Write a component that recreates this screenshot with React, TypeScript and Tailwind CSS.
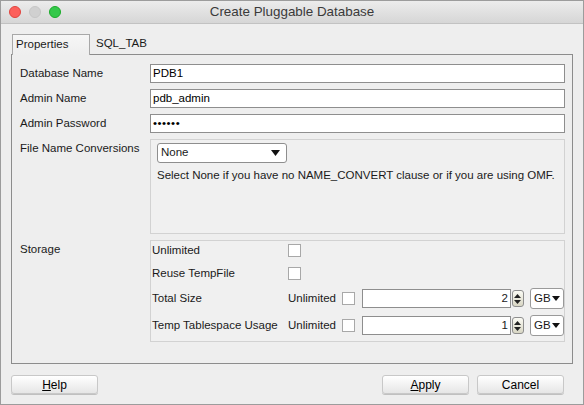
import { ReactNode } from 'react'

const font = { fontFamily: '"Liberation Sans", Arial, sans-serif' }

function TextField({ value, className = '' }: { value: string; className?: string }) {
  return (
    <div
      className={`flex h-[19px] items-center border border-[#8e8e8e] bg-white px-[2px] text-black ${className}`}
    >
      {value}
    </div>
  )
}

function Check() {
  return <div className="h-[13px] w-[13px] shrink-0 border border-[#a8a8a8] bg-white" />
}

function Caret() {
  return (
    <svg width="9" height="6" viewBox="0 0 9 6">
      <path d="M0 0 L9 0 L4.5 6 Z" fill="#111" />
    </svg>
  )
}

function Spinner({ value }: { value: string }) {
  return (
    <div className="flex items-center">
      <div className="flex h-[19px] w-[149px] items-center justify-end border border-[#8e8e8e] bg-white pr-[2px]">
        {value}
      </div>
      <div className="ml-[1px] flex h-[17px] w-[12px] flex-col items-center justify-center gap-[2px] rounded-[3px] border border-[#8e8e8e] bg-gradient-to-b from-[#fbfbf4] to-[#d8d6c4]">
        <svg width="7" height="4" viewBox="0 0 7 4">
          <path d="M0 4 L7 4 L3.5 0 Z" fill="#222" />
        </svg>
        <svg width="7" height="4" viewBox="0 0 7 4">
          <path d="M0 0 L7 0 L3.5 4 Z" fill="#222" />
        </svg>
      </div>
      <div className="ml-[6px] flex h-[21px] w-[34px] items-center justify-between rounded-[3px] border border-[#9a9a9a] bg-white pl-[3px] pr-[3px]">
        <span>GB</span>
        <svg width="8" height="5" viewBox="0 0 8 5">
          <path d="M0 0 L8 0 L4 5 Z" fill="#111" />
        </svg>
      </div>
    </div>
  )
}

function Row({ label, children }: { label: string; children: ReactNode }) {
  return (
    <div className="flex items-center">
      <div className="w-[130px] shrink-0">{label}</div>
      <div className="flex-1">{children}</div>
    </div>
  )
}

function Button({ children, className = '' }: { children: ReactNode; className?: string }) {
  return (
    <div
      className={`flex h-[19px] w-[87px] items-center justify-center rounded-[3px] border border-[#c8c8c8] bg-gradient-to-b from-[#ffffff] to-[#e6e6e6] text-[12px] text-black shadow-[0_1px_0_#c0c0c0] ${className}`}
    >
      {children}
    </div>
  )
}

export default function App() {
  return (
    <div
      className="flex h-[405px] w-[584px] flex-col overflow-hidden border border-[#9c9c9c] bg-[#eeeeee] text-[11.5px] text-[#1a1a1a]"
      style={font}
    >
      <div className="relative flex h-[23px] shrink-0 items-center justify-center border-b border-[#c2c2c2] bg-gradient-to-b from-[#ececec] to-[#d6d6d6]">
        <div className="absolute left-[8px] top-[5px] flex gap-[8px]">
          <div className="h-[12px] w-[12px] rounded-full border border-[#e0443e] bg-[#fc605b]" />
          <div className="h-[12px] w-[12px] rounded-full border border-[#c6c6c6] bg-[#d0d0d0]" />
          <div className="h-[12px] w-[12px] rounded-full border border-[#1aab29] bg-[#34c84a]" />
        </div>
        <span className="text-[13.4px] text-[#3a3a3a]">Create Pluggable Database</span>
      </div>

      <div className="flex flex-1 flex-col px-[10px] pt-[9px]">
        <div className="flex items-end">
          <div className="relative z-10 -mb-px ml-[1px] flex h-[21px] w-[78px] items-center border border-b-0 border-[#a8a8a8] bg-gradient-to-b from-[#f6f6f6] to-[#eeeeee] pl-[3px]">
            Properties
          </div>
          <div className="flex h-[21px] items-center pl-[6px]">SQL_TAB</div>
        </div>

        <div className="flex h-[310px] flex-col gap-[6px] border border-[#8c8c8c] pl-[8px] pr-[7px] pt-[9px]">
          <Row label="Database Name">
            <TextField value="PDB1" />
          </Row>
          <Row label="Admin Name">
            <TextField value="pdb_admin" />
          </Row>
          <Row label="Admin Password">
            <TextField value="••••••" className="tracking-[0.5px]" />
          </Row>

          <div className="flex">
            <div className="w-[130px] shrink-0 pt-[1px]">File Name Conversions</div>
            <div className="flex h-[95px] flex-1 flex-col border border-[#d2d2d2] bg-[#f0f0f0] pl-[6px] pt-[3px]">
              <div className="flex h-[20px] w-[130px] items-center justify-between rounded-[3px] border border-[#8e8e8e] bg-white pl-[3px] pr-[6px]">
                <span>None</span>
                <Caret />
              </div>
              <div className="mt-[3px] leading-[18px]">
                Select None if you have no NAME_CONVERT clause or if you are using OMF.
              </div>
            </div>
          </div>

          <div className="flex">
            <div className="w-[130px] shrink-0 pt-[1px]">Storage</div>
            <div className="flex h-[102px] flex-1 flex-col gap-[6px] border border-[#d2d2d2] bg-[#f0f0f0] pl-[1px] pt-[1px]">
              <div className="flex h-[17px] items-center">
                <div className="w-[136px] shrink-0">Unlimited</div>
                <Check />
              </div>
              <div className="flex h-[17px] items-center">
                <div className="w-[136px] shrink-0">Reuse TempFile</div>
                <Check />
              </div>
              <div className="flex h-[21px] items-center">
                <div className="w-[136px] shrink-0">Total Size</div>
                <span className="mr-[6px]">Unlimited</span>
                <Check />
                <div className="ml-[7px]">
                  <Spinner value="2" />
                </div>
              </div>
              <div className="flex h-[21px] items-center">
                <div className="w-[136px] shrink-0">Temp Tablespace Usage</div>
                <span className="mr-[6px]">Unlimited</span>
                <Check />
                <div className="ml-[7px]">
                  <Spinner value="1" />
                </div>
              </div>
            </div>
          </div>
        </div>

        <div className="mt-[11px] flex items-center pr-[9px]">
          <Button>
            <span className="underline">H</span>elp
          </Button>
          <div className="flex-1" />
          <Button>
            <span className="underline">A</span>pply
          </Button>
          <Button className="ml-[8px]">Cancel</Button>
        </div>
      </div>
    </div>
  )
}
